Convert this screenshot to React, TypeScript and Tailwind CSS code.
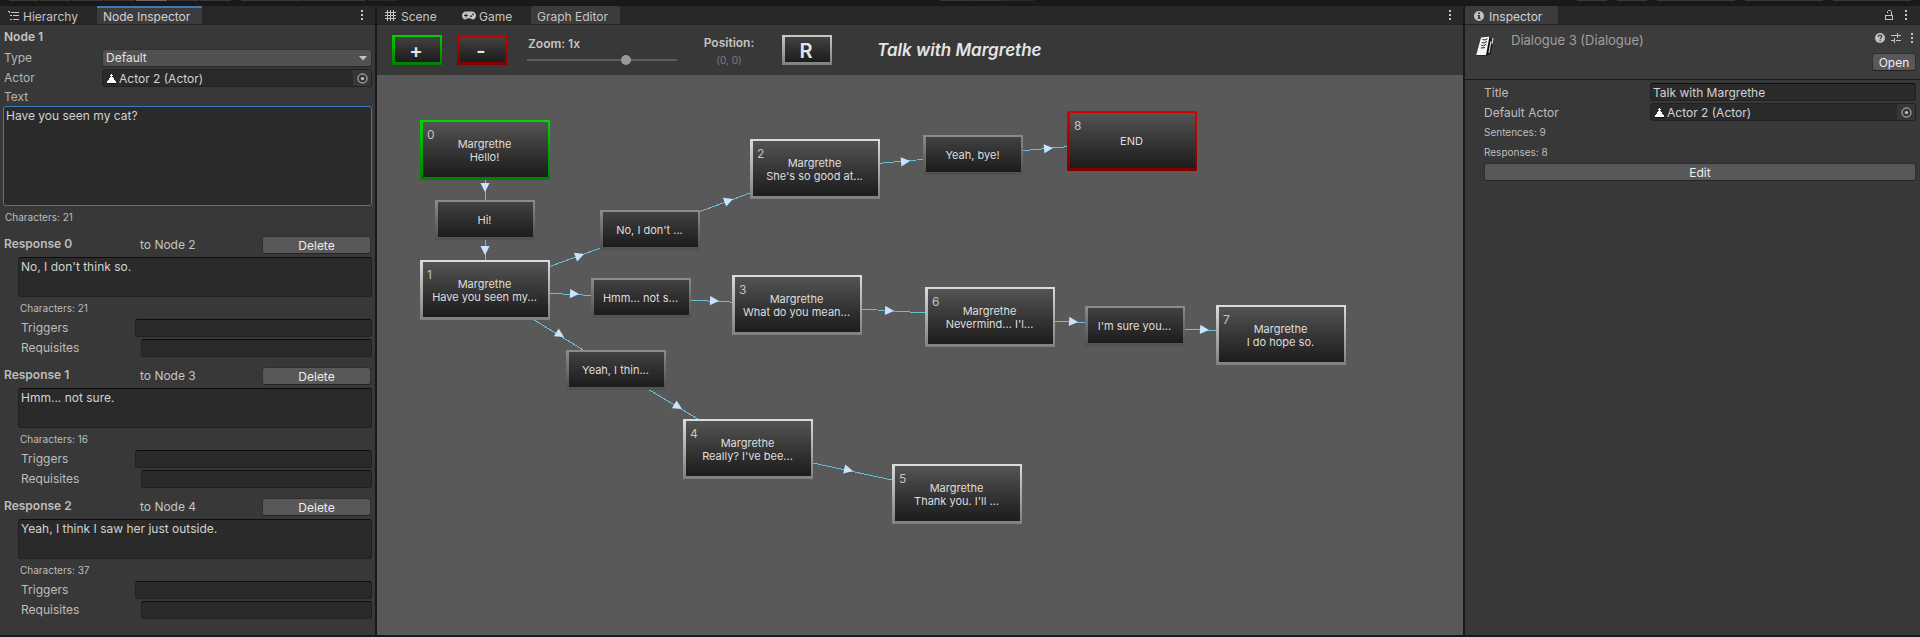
import React from "react";

type Variant = "start" | "end" | "node" | "response";

interface GraphBox {
  id: string;
  x: number;
  y: number;
  variant: Variant;
  index?: number;
  lines: string[];
}

interface Edge {
  from: string;
  to: string;
  tip: [number, number];
}

const boxes: GraphBox[] = [
  { id: "n0", x: 43, y: 45, variant: "start", index: 0, lines: ["Margrethe", "Hello!"] },
  { id: "r0", x: 58, y: 125, variant: "response", lines: ["Hi!"] },
  { id: "n1", x: 43, y: 185, variant: "node", index: 1, lines: ["Margrethe", "Have you seen my..."] },
  { id: "r1", x: 223, y: 135, variant: "response", lines: ["No, I don't ..."] },
  { id: "n2", x: 373, y: 64, variant: "node", index: 2, lines: ["Margrethe", "She's so good at..."] },
  { id: "r2", x: 546, y: 60, variant: "response", lines: ["Yeah, bye!"] },
  { id: "n8", x: 690, y: 36, variant: "end", index: 8, lines: ["END"] },
  { id: "r3", x: 214, y: 203, variant: "response", lines: ["Hmm... not s..."] },
  { id: "n3", x: 355, y: 200, variant: "node", index: 3, lines: ["Margrethe", "What do you mean..."] },
  { id: "n6", x: 548, y: 212, variant: "node", index: 6, lines: ["Margrethe", "Nevermind... I'l..."] },
  { id: "r4", x: 708, y: 231, variant: "response", lines: ["I'm sure you..."] },
  { id: "n7", x: 839, y: 230, variant: "node", index: 7, lines: ["Margrethe", "I do hope so."] },
  { id: "r5", x: 189, y: 275, variant: "response", lines: ["Yeah, I thin..."] },
  { id: "n4", x: 306, y: 344, variant: "node", index: 4, lines: ["Margrethe", "Really? I've bee..."] },
  { id: "n5", x: 515, y: 389, variant: "node", index: 5, lines: ["Margrethe", "Thank you. I'll ..."] },
];

const edges: Edge[] = [
  { from: "n0", to: "r0", tip: [108, 117] },
  { from: "r0", to: "n1", tip: [108, 180] },
  { from: "n1", to: "r1", tip: [207, 179] },
  { from: "r1", to: "n2", tip: [356, 124] },
  { from: "n2", to: "r2", tip: [533, 86] },
  { from: "r2", to: "n8", tip: [676, 73] },
  { from: "n1", to: "r3", tip: [202, 219] },
  { from: "r3", to: "n3", tip: [342, 226] },
  { from: "n3", to: "n6", tip: [517, 236] },
  { from: "n6", to: "r4", tip: [701, 247] },
  { from: "r4", to: "n7", tip: [832, 255] },
  { from: "n1", to: "r5", tip: [187, 262] },
  { from: "r5", to: "n4", tip: [305, 334] },
  { from: "n4", to: "n5", tip: [476, 396] },
];

const frame: Record<Variant, string> = {
  start: "w-[130px] h-[60px] from-[#00d800] to-[#008000]",
  end: "w-[130px] h-[60px] from-[#dc0000] to-[#800000]",
  node: "w-[130px] h-[60px] from-[#dcdcdc] to-[#808080]",
  response: "w-[100px] h-[40px] from-[#8c8c8c] to-[#505050]",
};

const fill: Record<Variant, string> = {
  start: "from-[#545454]",
  end: "from-[#545454]",
  node: "from-[#545454]",
  response: "from-[#424242]",
};

function center(id: string): [number, number] {
  const b = boxes.find((box) => box.id === id)!;
  return b.variant === "response" ? [b.x + 50, b.y + 20] : [b.x + 65, b.y + 30];
}

function EdgeShape({ edge }: { edge: Edge }) {
  const [x1, y1] = center(edge.from);
  const [x2, y2] = center(edge.to);
  const angle = (Math.atan2(y2 - y1, x2 - x1) * 180) / Math.PI;
  return (
    <g>
      <line x1={x1} y1={y1} x2={x2} y2={y2} stroke="#62c2da" strokeWidth="1" shapeRendering="crispEdges" />
      <polygon
        points="0,0 -9,-4.6 -9,4.6"
        fill="#c8e4ff"
        transform={`translate(${edge.tip[0]} ${edge.tip[1]}) rotate(${angle})`}
      />
    </g>
  );
}

function Box({ box }: { box: GraphBox }) {
  return (
    <button
      type="button"
      className={`absolute bg-linear-to-b pt-[2px] pr-[2px] pb-[3px] pl-[3px] ${frame[box.variant]}`}
      style={{ left: box.x, top: box.y }}
    >
      <span
        className={`relative flex h-full flex-col items-center justify-center bg-linear-to-b to-[#1c1c1c] pt-[2px] pr-[2px] text-[11px] leading-[13px] text-[#dedede] ${fill[box.variant]}`}
      >
        {box.index !== undefined && (
          <span className="absolute top-[6px] left-1 text-xs leading-[14px] text-[#c4c4c4]">{box.index}</span>
        )}
        {box.lines.map((line) => (
          <span key={line} className="whitespace-nowrap">{line}</span>
        ))}
      </span>
    </button>
  );
}

function Dots() {
  return (
    <svg width="4" height="12" viewBox="0 0 4 12" fill="#c4c4c4" aria-hidden="true">
      <rect x="1" y="1" width="2" height="2" />
      <rect x="1" y="5" width="2" height="2" />
      <rect x="1" y="9" width="2" height="2" />
    </svg>
  );
}

function HierarchyIcon() {
  return (
    <svg width="11" height="10" viewBox="0 0 11 10" fill="#c4c4c4" aria-hidden="true">
      <rect x="0" y="0" width="2" height="1" />
      <rect x="1" y="0" width="1" height="2" />
      <rect x="3" y="1" width="8" height="1" />
      <rect x="2" y="4" width="2" height="1" />
      <rect x="5" y="4" width="6" height="1" />
      <rect x="2" y="8" width="2" height="1" />
      <rect x="5" y="8" width="6" height="1" />
    </svg>
  );
}

function SceneIcon() {
  return (
    <svg width="11" height="11" viewBox="0 0 11 11" stroke="#c4c4c4" strokeWidth="1" aria-hidden="true">
      <path d="M2.5 0V11M5.5 0V11M8.5 0V11M0 2.5H11M0 5.5H11M0 8.5H11" />
    </svg>
  );
}

function GameIcon() {
  return (
    <svg width="14" height="9" viewBox="0 0 14 9" aria-hidden="true">
      <path d="M4 0.5H10C12.5 0.5 14 2.3 14 4.5S12.6 8.5 10.8 8.5C9.4 8.5 9 7.2 8 7.2H6C5 7.2 4.6 8.5 3.2 8.5C1.4 8.5 0 6.7 0 4.5S1.5 0.5 4 0.5Z" fill="#c4c4c4" />
      <path d="M2 4.5H6M4 2.5V6.5" stroke="#282828" strokeWidth="1" />
      <circle cx="9" cy="5.2" r="0.9" fill="#282828" />
      <circle cx="11" cy="3.4" r="0.9" fill="#282828" />
    </svg>
  );
}

function InfoIcon() {
  return (
    <svg width="10" height="10" viewBox="0 0 10 10" aria-hidden="true">
      <circle cx="5" cy="5" r="5" fill="#c4c4c4" />
      <path d="M4 1.5H6V3H4ZM3.5 4H6V7H6.7V8H3.5V7H4.2V5H3.5Z" fill="#3c3c3c" />
    </svg>
  );
}

function LockIcon() {
  return (
    <svg width="9" height="11" viewBox="0 0 9 11" fill="none" stroke="#c4c4c4" aria-hidden="true">
      <rect x="0.5" y="5.5" width="7" height="4" />
      <path d="M6.5 5.5V1.5L5.5 0.5H3.5L2.5 1.5V3" />
    </svg>
  );
}

function HelpIcon() {
  return (
    <svg width="10" height="10" viewBox="0 0 10 10" aria-hidden="true">
      <circle cx="5" cy="5" r="5" fill="#c4c4c4" />
      <path d="M3.2 3.9C3.2 2.8 4 2.2 5 2.2S6.8 2.8 6.8 3.7C6.8 4.8 5.1 4.9 5.1 6.2" fill="none" stroke="#3c3c3c" strokeWidth="1.2" />
      <rect x="4.5" y="7" width="1.2" height="1.2" fill="#3c3c3c" />
    </svg>
  );
}

function PresetIcon() {
  return (
    <svg width="10" height="10" viewBox="0 0 10 10" stroke="#c4c4c4" aria-hidden="true">
      <path d="M0 2.5H6M6.5 0V5M6.5 2.5H10M0 7.5H3M3.5 5V10M5 7.5H10" />
    </svg>
  );
}

function PawnIcon() {
  return (
    <svg width="9" height="10" viewBox="0 0 9 10" aria-hidden="true">
      <path d="M4 0H5V1H6V4H7V6H8V7H9V9H0V7H1V6H2V4H3V1H4Z" fill="#ffffff" />
      <rect x="0" y="9" width="9" height="1" fill="#111111" />
      <rect x="3" y="2" width="1" height="1" fill="#2a2a2a" />
      <rect x="5" y="2" width="1" height="1" fill="#2a2a2a" />
    </svg>
  );
}

function BookIcon() {
  return (
    <svg width="20" height="22" viewBox="0 0 20 22" aria-hidden="true">
      <path d="M6 2.5L15 1L16 4L13.5 20L12 20.5L1 20.5Z" fill="#111111" />
      <path d="M6 2.5L14.5 1.5L11 20H1.2Z" fill="#f5f5f5" />
      <path d="M16.5 5L14 19" stroke="#111111" strokeWidth="3" />
      <path d="M16 6L14 18M18 3L17 9" stroke="#e8e8e8" />
      <path d="M7.5 4.5L10 5L12.5 3.8M6.8 7.5L9 8L12 6.5M6.2 10L8.5 10.8L11.3 9.3M5.8 13L10 12.6" stroke="#222222" fill="none" />
    </svg>
  );
}

function TargetIcon() {
  return (
    <svg width="11" height="11" viewBox="0 0 11 11" aria-hidden="true">
      <circle cx="5.5" cy="5.5" r="4.6" fill="none" stroke="#c4c4c4" />
      <circle cx="5.5" cy="5.5" r="1.6" fill="#c4c4c4" />
    </svg>
  );
}

const fieldClass =
  "block rounded-[3px] border border-[#212121] border-t-[#0d0d0d] bg-[#2a2a2a] text-xs text-[#d2d2d2] outline-none";
const buttonClass =
  "rounded-[3px] border border-[#303030] border-b-[#242424] bg-[#585858] pt-[2px] text-center text-xs leading-[14px] text-[#eeeeee]";

function ObjectField({ labelledBy }: { labelledBy: string }) {
  return (
    <div
      role="group"
      aria-labelledby={labelledBy}
      className="flex h-[18px] min-w-0 flex-1 overflow-hidden rounded-[3px] border border-[#212121] bg-[#2a2a2a]"
    >
      <span className="flex flex-1 items-center gap-[3px] pt-[2px] pl-1 text-xs leading-[14px] text-[#d2d2d2]">
        <PawnIcon />
        Actor 2 (Actor)
      </span>
      <button type="button" aria-label="Select actor" className="flex w-[18px] items-center justify-center bg-[#373737]">
        <TargetIcon />
      </button>
    </div>
  );
}

function MenuButton({ label }: { label: string }) {
  return (
    <button type="button" aria-label={label} className="flex h-4 w-4 items-center justify-center">
      <Dots />
    </button>
  );
}

function TabBar({ children }: { children: React.ReactNode }) {
  return (
    <div className="flex h-[19px] items-stretch rounded-t-[3px] border-b border-[#232323] bg-[#282828] text-xs leading-4 text-[#c4c4c4]">
      {children}
    </div>
  );
}

interface ResponseData {
  index: number;
  target: number;
  text: string;
  count: number;
}

const responses: ResponseData[] = [
  { index: 0, target: 2, text: "No, I don't think so.", count: 21 },
  { index: 1, target: 3, text: "Hmm... not sure.", count: 16 },
  { index: 2, target: 4, text: "Yeah, I think I saw her just outside.", count: 37 },
];

function ResponseBlock({ data }: { data: ResponseData }) {
  const id = `response-${data.index}`;
  return (
    <section className="mt-[10px]">
      <div className="flex h-[18px] items-center pr-px pl-1">
        <label htmlFor={id} className="w-[136px] pb-[2px] text-xs leading-4 font-semibold text-[#bdbdbd]">
          Response {data.index}
        </label>
        <span className="flex-1 text-xs leading-4 text-[#c4c4c4]">to Node {data.target}</span>
        <button type="button" className={`h-[18px] w-[109px] ${buttonClass}`}>Delete</button>
      </div>
      <div className="pl-[18px]">
        <textarea id={id} defaultValue={data.text} className={`mt-[3px] h-10 w-full resize-none px-[2px] py-px leading-4 ${fieldClass}`} />
        <p className="mt-[3px] pl-[2px] text-[10px] leading-4 text-[#bdbdbd]">Characters: {data.count}</p>
        <div className="mt-[3px] flex h-[18px] items-center pl-[3px]">
          <label htmlFor={`${id}-triggers`} className="w-[114px] text-xs leading-4 text-[#bdbdbd]">Triggers</label>
          <input id={`${id}-triggers`} className={`h-[18px] min-w-0 flex-1 px-1 ${fieldClass}`} />
        </div>
        <div className="mt-[2px] flex h-[18px] items-center pl-[3px]">
          <label htmlFor={`${id}-requisites`} className="w-[120px] text-xs leading-4 text-[#bdbdbd]">Requisites</label>
          <input id={`${id}-requisites`} className={`h-[18px] min-w-0 flex-1 px-1 ${fieldClass}`} />
        </div>
      </div>
    </section>
  );
}

function NodeInspector() {
  return (
    <aside className="flex w-[375px] shrink-0 flex-col bg-[#383838]">
      <TabBar>
        <button type="button" className="flex w-[97px] items-center gap-1 pt-px pl-2">
          <HierarchyIcon />
          <span className="pt-[2px]">Hierarchy</span>
        </button>
        <button type="button" className="w-[105px] border-t-2 border-[#3a79bb] bg-[#3c3c3c] pt-px pl-[6px] text-left text-[#d2d2d2]">
          Node Inspector
        </button>
        <div className="flex flex-1 items-center justify-end pr-[5px]">
          <MenuButton label="Node inspector menu" />
        </div>
      </TabBar>
      <form className="pt-[3px] pr-[3px]">
        <h2 className="h-[18px] pl-1 text-xs leading-[18px] font-semibold text-[#c4c4c4]">Node 1</h2>
        <div className="mt-[3px] flex h-[18px] items-center pl-1">
          <label htmlFor="node-type" className="w-[98px] text-xs leading-4 text-[#b4b4b4]">Type</label>
          <div className="relative min-w-0 flex-1">
            <select id="node-type" className="block h-[18px] w-full appearance-none rounded-[3px] border border-[#303030] border-b-[#242424] bg-[#515151] px-[3px] text-xs leading-4 text-[#e0e0e0] outline-none">
              <option>Default</option>
            </select>
            <svg width="8" height="5" viewBox="0 0 8 5" fill="#c4c4c4" className="pointer-events-none absolute top-[7px] right-[5px]" aria-hidden="true">
              <path d="M0 0H8L4 4.5Z" />
            </svg>
          </div>
        </div>
        <div className="mt-[2px] flex h-[18px] items-center pl-1">
          <span id="actor-label" className="w-[98px] text-xs leading-4 text-[#b4b4b4]">Actor</span>
          <ObjectField labelledBy="actor-label" />
        </div>
        <label htmlFor="node-text" className="mt-[2px] block pl-1 text-xs leading-4 text-[#b4b4b4]">Text</label>
        <div className="pl-[3px]">
          <textarea
            id="node-text"
            defaultValue="Have you seen my cat?"
            className="mt-px block h-[100px] w-full resize-none rounded-[3px] border border-[#3a79bb] bg-[#2a2a2a] px-[2px] py-px text-xs leading-4 text-[#d2d2d2] outline-none"
          />
        </div>
        <p className="mt-[3px] pb-px pl-[5px] text-[10px] leading-4 text-[#bdbdbd]">Characters: 21</p>
        {responses.map((r) => (
          <ResponseBlock key={r.index} data={r} />
        ))}
      </form>
    </aside>
  );
}

const toolFrame = "h-[30px] w-[50px] bg-linear-to-b pt-[2px] pr-[2px] pb-[3px] pl-[3px]";
const toolFace =
  "flex h-full items-center justify-center bg-linear-to-b from-[#424242] to-[#1c1c1c] pt-[2px] pr-[3px] text-xl leading-6 font-semibold text-[#e4e4e4]";

function GraphEditor() {
  return (
    <main className="flex min-w-0 flex-1 flex-col bg-[#383838]">
      <TabBar>
        <button type="button" className="flex w-[77px] items-center gap-[5px] pt-px pl-2">
          <SceneIcon />
          <span className="pt-[2px]">Scene</span>
        </button>
        <button type="button" className="flex w-[77px] items-center gap-[3px] pt-px pl-2">
          <GameIcon />
          <span className="pt-[2px]">Game</span>
        </button>
        <button type="button" className="w-[89px] rounded-t-[3px] bg-[#3c3c3c] pt-[3px] pl-[6px] text-left">Graph Editor</button>
        <div className="flex flex-1 items-center justify-end pr-[5px]">
          <MenuButton label="Graph editor menu" />
        </div>
      </TabBar>
      <div className="flex h-[50px] items-center pl-[15px]">
        <button type="button" aria-label="Add node" className={`${toolFrame} from-[#00d000] to-[#008000]`}>
          <span className={toolFace}>+</span>
        </button>
        <button type="button" aria-label="Remove node" className={`ml-[15px] ${toolFrame} from-[#cc0000] to-[#800000]`}>
          <span className={toolFace}>-</span>
        </button>
        <div className="ml-5 flex w-[150px] flex-col gap-[3px]">
          <label htmlFor="zoom" className="pl-px text-xs leading-4 font-semibold text-[#c4c4c4]">Zoom: 1x</label>
          <input
            id="zoom"
            type="range"
            min="0"
            max="100"
            defaultValue="67"
            className="block h-[10px] w-full appearance-none bg-transparent bg-linear-to-b from-[#5e5e5e] to-[#5e5e5e] bg-[length:100%_2px] bg-center bg-no-repeat outline-none [&::-webkit-slider-thumb]:h-[10px] [&::-webkit-slider-thumb]:w-[10px] [&::-webkit-slider-thumb]:appearance-none [&::-webkit-slider-thumb]:rounded-full [&::-webkit-slider-thumb]:bg-[#999999]"
          />
        </div>
        <div className="ml-[25px] flex w-[54px] flex-col items-center gap-[3px]">
          <span className="text-xs leading-4 font-semibold text-[#c4c4c4]">Position:</span>
          <span className="text-[10px] leading-3 text-[#7c7c7c]">(0, 0)</span>
        </div>
        <button type="button" aria-label="Reset position" className={`ml-[26px] ${toolFrame} from-[#c8c8c8] to-[#808080]`}>
          <span className={toolFace}>R</span>
        </button>
        <h1 className="ml-[45px] text-[17px] leading-5 font-semibold text-[#e4e4e4] italic">Talk with Margrethe</h1>
      </div>
      <div className="relative flex-1 overflow-hidden bg-[#595959]">
        <svg className="absolute inset-0 h-full w-full" aria-hidden="true">
          {edges.map((edge) => (
            <EdgeShape key={edge.from + edge.to} edge={edge} />
          ))}
        </svg>
        {boxes.map((box) => (
          <Box key={box.id} box={box} />
        ))}
      </div>
    </main>
  );
}

function Inspector() {
  return (
    <aside className="flex w-[455px] shrink-0 flex-col bg-[#383838]">
      <TabBar>
        <button type="button" className="flex w-[93px] items-center gap-[5px] rounded-t-[3px] bg-[#3c3c3c] pt-px pl-[9px] text-[#d2d2d2]">
          <InfoIcon />
          <span className="pt-[2px]">Inspector</span>
        </button>
        <div className="flex flex-1 items-center justify-end gap-1 pr-[6px]">
          <button type="button" aria-label="Lock inspector"><LockIcon /></button>
          <MenuButton label="Inspector menu" />
        </div>
      </TabBar>
      <header className="flex h-[55px] items-start border-b border-[#1a1a1a] bg-[#3c3c3c] pr-1 pl-[10px]">
        <span className="mt-[10px] w-9"><BookIcon /></span>
        <h2 className="mt-[5px] flex-1 text-[13px] leading-5 text-[#a0a0a0]">Dialogue 3 (Dialogue)</h2>
        <div className="flex flex-col items-end gap-[7px] pt-[5px]">
          <div className="-mr-1 flex items-center gap-[6px]">
            <button type="button" aria-label="Help"><HelpIcon /></button>
            <button type="button" aria-label="Presets"><PresetIcon /></button>
            <span className="-ml-[3px]"><MenuButton label="Dialogue menu" /></span>
          </div>
          <button type="button" className={`h-[18px] w-11 ${buttonClass}`}>Open</button>
        </div>
      </header>
      <form className="pt-[3px] pr-1 pl-[19px]">
        <div className="flex h-[18px] items-center">
          <label htmlFor="dialogue-title" className="w-[166px] pt-[2px] text-xs leading-4 text-[#bdbdbd]">Title</label>
          <input id="dialogue-title" defaultValue="Talk with Margrethe" className={`h-[18px] min-w-0 flex-1 px-[2px] pt-px ${fieldClass}`} />
        </div>
        <div className="mt-[2px] flex h-[18px] items-center">
          <span id="default-actor" className="w-[166px] pt-[2px] text-xs leading-4 text-[#bdbdbd]">Default Actor</span>
          <ObjectField labelledBy="default-actor" />
        </div>
        <p className="mt-[3px] text-[10px] leading-4 text-[#bdbdbd]">Sentences: 9</p>
        <p className="mt-1 text-[10px] leading-4 text-[#bdbdbd]">Responses: 8</p>
        <button type="button" className={`mt-[3px] block h-[18px] w-full ${buttonClass}`}>Edit</button>
      </form>
    </aside>
  );
}

function TopStrip() {
  return (
    <div className="flex h-[6px] items-start justify-between px-[9px]" aria-hidden="true">
      <div className="flex gap-px">
        <i className="h-px w-[30px] bg-[#383838]" />
        <i className="h-px w-[31px] bg-[#383838]" />
        <i className="h-px w-[31px] bg-[#383838]" />
        <i className="h-px w-[31px] bg-[#383838]" />
        <i className="h-px w-[31px] bg-[#6a6a6a]" />
        <i className="h-px w-[31px] bg-[#383838]" />
        <i className="h-px w-[31px] bg-[#383838]" />
        <i className="ml-[9px] h-px w-[61px] bg-[#383838]" />
        <i className="h-px w-[62px] bg-[#383838]" />
        <i className="ml-[2px] h-px w-[29px] bg-[#2a2a2a]" />
      </div>
      <div className="flex gap-px">
        <i className="h-px w-[30px] bg-[#383838]" />
        <i className="h-px w-[31px] bg-[#383838]" />
        <i className="h-px w-[31px] bg-[#2a2a2a]" />
      </div>
      <div className="flex gap-[10px]">
        <i className="h-px w-[30px] bg-[#383838]" />
        <i className="h-px w-[30px] bg-[#383838]" />
        <i className="h-px w-[78px] bg-[#383838]" />
        <i className="h-px w-[78px] bg-[#383838]" />
        <i className="h-px w-[78px] bg-[#383838]" />
      </div>
    </div>
  );
}

export default function App() {
  return (
    <div className="flex min-h-screen flex-col bg-[#191919] pb-[2px] font-['Inter',sans-serif]">
      <TopStrip />
      <div className="flex flex-1 gap-[2px]">
        <NodeInspector />
        <GraphEditor />
        <Inspector />
      </div>
    </div>
  );
}
